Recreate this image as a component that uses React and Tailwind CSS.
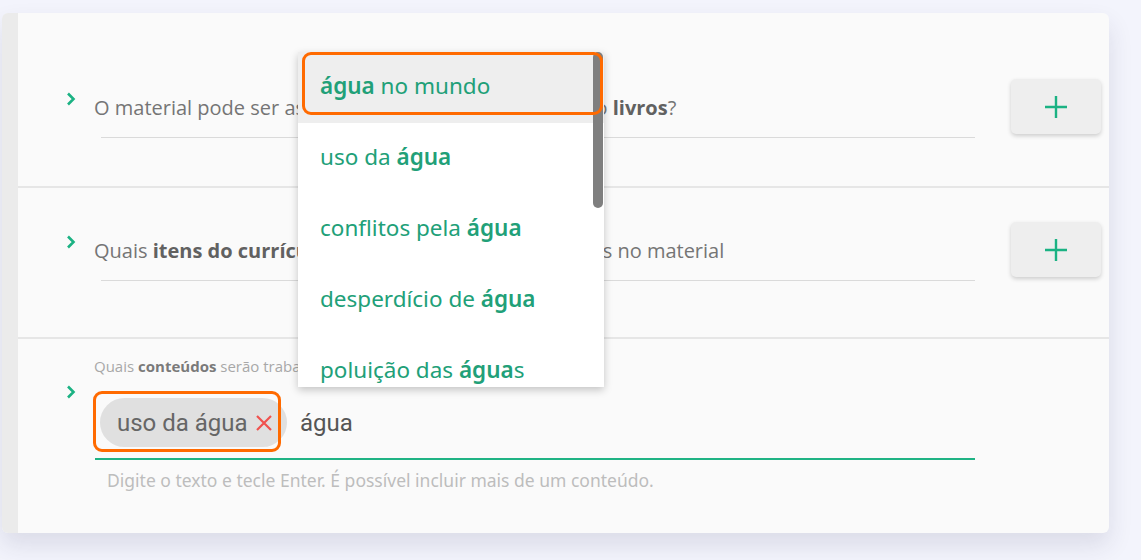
import React from "react";

const GREEN = "#1bb283";

const Chevron = () => (
  <svg width="12" height="14" viewBox="0 0 12 14" className="shrink-0">
    <path d="M3 1.5 L8.5 7 L3 12.5" fill="none" stroke={GREEN} strokeWidth="2.6" />
  </svg>
);

const PlusButton = () => (
  <button className="w-[90px] h-[55px] shrink-0 rounded-[5px] bg-[#eeeeee] shadow-[0_2px_4px_rgba(0,0,0,0.18)] flex items-center justify-center">
    <svg width="24" height="24" viewBox="0 0 24 24">
      <path d="M12 1 V23 M1 12 H23" stroke={GREEN} strokeWidth="2.4" />
    </svg>
  </button>
);

const QuestionRow = ({ children, top }) => (
  <div className={`flex items-start border-b-2 border-[#e6e6e6] ${top}`}>
    <div className="ml-[47px] mt-[13px]">
      <Chevron />
    </div>
    <div className="ml-[24px] w-[874px] h-[59px] flex items-center border-b border-[#dadada]">
      <p className="-ml-[7px] whitespace-nowrap text-[20px] text-[#757575] font-['Open_Sans',sans-serif]">{children}</p>
    </div>
    <div className="ml-[36px]">
      <PlusButton />
    </div>
  </div>
);

const suggestions = [
  [<b key="a" className="font-semibold">água</b>, " no mundo"],
  ["uso da ", <b key="a" className="font-semibold">água</b>],
  ["conflitos pela ", <b key="a" className="font-semibold">água</b>],
  ["desperdício de ", <b key="a" className="font-semibold">água</b>],
  ["poluição das ", <b key="a" className="font-semibold">água</b>, "s"],
];

const Dropdown = () => (
  <div className="absolute left-[296px] top-[39px] w-[306px] h-[335px] bg-white overflow-hidden shadow-[0_3px_8px_rgba(0,0,0,0.22)] z-10">
    {suggestions.map((s, i) => (
      <div
        key={i}
        className={`h-[71px] flex items-center px-[22px] pb-[3px] text-[22.5px] text-[#21a078] font-['Noto_Sans',sans-serif] ${i === 0 ? "bg-[#eeeeee]" : ""}`}
      >
        <span className="whitespace-nowrap">{s}</span>
      </div>
    ))}
    <div className="absolute right-[1px] top-0 w-[10px] h-[156px] rounded-full bg-[#7f7f7f]" />
    <div className="absolute left-[4px] top-0 w-[301px] h-[63px] rounded-[9px] border-[3px] border-[#ff6a00]" />
  </div>
);

export default function App() {
  return (
    <div className="w-[1141px] h-[560px] bg-[#f3f4fc] pt-[13px] pl-[2px] overflow-hidden">
      <div className="relative w-[1107px] h-[520px] flex rounded-[6px] bg-[#fafafa] shadow-[0_12px_24px_rgba(40,40,80,0.12)]">
        <div className="w-[16px] h-full bg-[#ebebeb] rounded-l-[6px]" />
        <div className="flex-1">
          <QuestionRow top="pt-[66px] h-[175px]">
            O material pode ser associado a outros recursos, como <b className="font-bold text-[#616161]">livros</b>?
          </QuestionRow>
          <QuestionRow top="pt-[34px] h-[151px]">
            Quais <b className="font-bold text-[#616161]">itens do currículo</b> de Ciências serão trabalhados no material
          </QuestionRow>

          <div className="pt-[17px] pl-[76px] font-['Open_Sans',sans-serif]">
            <p className="text-[15px] leading-[20px] text-[#a8a8a8] whitespace-nowrap">
              Quais <b className="font-bold text-[#7a7a7a]">conteúdos</b> serão trabalhados no material?
            </p>
          </div>
          <div className="flex items-start">
            <div className="ml-[47px] mt-[9px]">
              <Chevron />
            </div>
            <div className="ml-[18px] w-[880px]">
              <div className="flex items-center pl-[5px] pt-[22px] pb-[11px] border-b-2 border-[#1fb384] font-['Roboto',sans-serif]">
                <div className="relative h-[49px] w-[187px] rounded-full bg-[#e0e0e0] flex items-center pl-[17px]">
                  <span className="text-[24px] text-[#666666] whitespace-nowrap">uso da água</span>
                  <svg width="18" height="18" viewBox="0 0 18 18" className="ml-[7px] shrink-0">
                    <path d="M2 2 L16 16 M16 2 L2 16" stroke="#f0524f" strokeWidth="2.2" />
                  </svg>
                  <div className="absolute -left-[7px] -top-[7px] w-[188px] h-[61px] rounded-[9px] border-[3px] border-[#ff6a00]" />
                </div>
                <span className="ml-[13px] text-[24px] text-[#555555]">água</span>
              </div>
              <p className="mt-[9px] ml-[12px] text-[17.5px] leading-[22px] text-[#bdbdbd] font-['Noto_Sans',sans-serif] whitespace-nowrap">
                Digite o texto e tecle Enter. É possível incluir mais de um conteúdo.
              </p>
            </div>
          </div>
        </div>
        <Dropdown />
      </div>
    </div>
  );
}
